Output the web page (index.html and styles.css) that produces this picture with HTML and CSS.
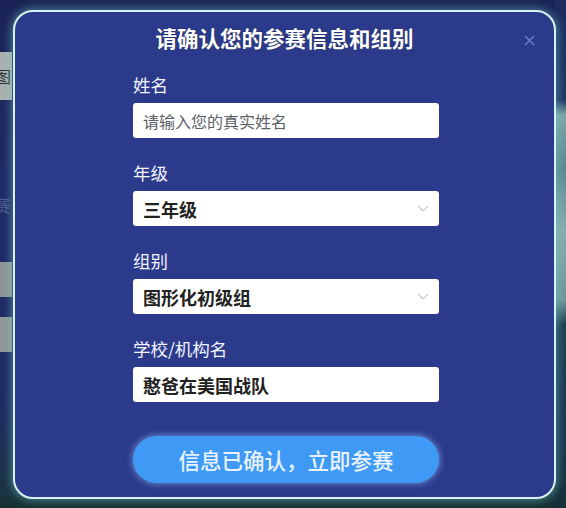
FILE: index.html
```html
<!DOCTYPE html>
<html lang="zh-CN">
<head>
<meta charset="utf-8">
<title>确认参赛信息</title>
<link rel="stylesheet" href="styles.css">
</head>
<body>
<div class="backdrop">
  <div class="rail-left">
    <div class="tile tile-a">图</div>
    <div class="rail-text">赛</div>
    <div class="tile tile-b"></div>
    <div class="tile tile-c"></div>
  </div>
  <div class="rail-right"></div>
</div>

<div class="modal">
  <h1 class="title">请确认您的参赛信息和组别</h1>
  <button class="close" type="button" aria-label="关闭">
    <svg width="11" height="11" viewBox="0 0 11 11"><path d="M1 1L10 10M10 1L1 10" stroke="#7482d4" stroke-width="1.3" fill="none"/></svg>
  </button>
  <form class="form">
    <div class="field">
      <label class="label">姓名</label>
      <input class="control input" type="text" placeholder="请输入您的真实姓名">
    </div>
    <div class="field">
      <label class="label">年级</label>
      <div class="control select"><span>三年级</span>
        <svg class="chev" width="12" height="7" viewBox="0 0 12 7"><path d="M1 1L6 6L11 1" stroke="#c4c8d0" stroke-width="1.2" fill="none"/></svg>
      </div>
    </div>
    <div class="field">
      <label class="label">组别</label>
      <div class="control select"><span>图形化初级组</span>
        <svg class="chev" width="12" height="7" viewBox="0 0 12 7"><path d="M1 1L6 6L11 1" stroke="#c4c8d0" stroke-width="1.2" fill="none"/></svg>
      </div>
    </div>
    <div class="field">
      <label class="label">学校/机构名</label>
      <div class="control select"><span>憨爸在美国战队</span></div>
    </div>
    <button class="submit" type="button">信息已确认，立即参赛</button>
  </form>
</div>
</body>
</html>
```

FILE: styles.css
```css
* { box-sizing: border-box; }

html, body {
  margin: 0;
  padding: 0;
}

body {
  width: 566px;
  height: 508px;
  overflow: hidden;
  position: relative;
  font-family: "Noto Sans CJK SC", "Noto Sans", sans-serif;
  background: linear-gradient(to bottom, #1b2356 0px, #212b68 40%, #202b63 80%, #1b3442 97%, #16302f 100%);
}

.backdrop {
  height: 508px;
  display: flex;
  justify-content: space-between;
}

.rail-left {
  width: 13px;
  display: flex;
  flex-direction: column;
  overflow: hidden;
}

.tile {
  width: 12px;
  overflow: hidden;
  color: #2b2f36;
  font-size: 16px;
  line-height: 48px;
  text-indent: -5px;
}

.tile-a {
  margin-top: 52px;
  height: 48px;
  background: #a9b1af;
}

.rail-text {
  margin-top: 95px;
  height: 20px;
  color: #4f5d8e;
  font-size: 16px;
  line-height: 20px;
  text-indent: -6px;
  overflow: hidden;
}

.tile-b {
  margin-top: 47px;
  height: 35px;
  background: #8d9695;
}

.tile-c {
  margin-top: 20px;
  height: 35px;
  background: #8f9897;
}

.rail-right {
  width: 11px;
  height: 508px;
  background: linear-gradient(to bottom, #1d2a5e 0px, #1f3660 100px, #7fa3a6 115px, #5d8790 170px, #8aacad 230px, #6f9599 300px, #1f3d52 325px, #1b3450 440px, #18303a 500px);
}

.modal {
  position: absolute;
  left: 13px;
  top: 10px;
  width: 543px;
  height: 489px;
  background: #2c3a8b;
  border: 2px solid #d8f2f1;
  border-radius: 20px;
  box-shadow: 0 0 8px 2px rgba(110, 210, 210, 0.45);
  padding: 12px 0 0 118px;
}

.title {
  margin: 0 0 22px -120px;
  width: 543px;
  text-align: center;
  color: #ffffff;
  font-size: 21.5px;
  font-weight: 700;
  line-height: 28px;
  text-shadow: 0 0 1px rgba(0, 0, 0, 0.6);
}

.close {
  position: absolute;
  top: 21px;
  right: 18px;
  width: 14px;
  height: 14px;
  padding: 0;
  border: 0;
  background: transparent;
  display: flex;
  align-items: center;
  justify-content: center;
}

.form {
  width: 306px;
  display: flex;
  flex-direction: column;
  gap: 24px;
}

.field {
  display: flex;
  flex-direction: column;
  gap: 7px;
}

.label {
  color: #f2f4ff;
  font-size: 17.5px;
  line-height: 22px;
}

.control {
  width: 306px;
  height: 35px;
  border: 0;
  border-radius: 3px;
  background: #ffffff;
  padding: 0 10px;
  font-family: "Noto Sans CJK SC", "Noto Sans", sans-serif;
}

.input {
  font-size: 16px;
  color: #333;
  outline: none;
}

.input::placeholder {
  color: #5d5f66;
}

.select {
  display: flex;
  align-items: center;
  justify-content: space-between;
  font-size: 18px;
  font-weight: 700;
  color: #222;
}

.submit {
  margin-top: 10px;
  width: 306px;
  height: 47px;
  border: 0;
  border-radius: 24px;
  background: #3f9af5;
  box-shadow: 0 0 6px 1px rgba(150, 200, 255, 0.55);
  color: #e9f2ff;
  font-family: "Noto Sans CJK SC", "Noto Sans", sans-serif;
  font-size: 21.5px;
  font-weight: 500;
  line-height: 47px;
  padding: 0;
}
```
